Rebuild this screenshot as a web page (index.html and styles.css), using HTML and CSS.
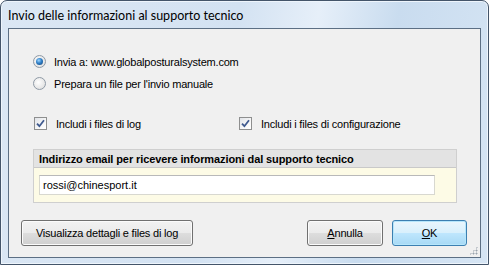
FILE: index.html
```html
<!DOCTYPE html>
<html lang="it">
<head>
    <meta charset="UTF-8">
    <meta name="viewport" content="width=device-width, initial-scale=1.0">
    <title>Invio delle informazioni al supporto tecnico</title>
    <link rel="stylesheet" href="styles.css">
</head>
<body>

    <div class="window">
        <div class="titlebar">
            <span class="title">Invio delle informazioni al supporto tecnico</span>
        </div>

        <div class="client">
            <div class="options">
                <label class="option option-first">
                    <span class="radio checked"></span>
                    <span>Invia a: www.globalposturalsystem.com</span>
                </label>
                <label class="option option-second">
                    <span class="radio"></span>
                    <span>Prepara un file per l'invio manuale</span>
                </label>
                <div class="checks">
                    <label class="option">
                        <span class="check">
                            <svg width="9" height="9" viewBox="0 0 9 9"><path d="M1 4.6 L3.4 7.2 L8 1.2" fill="none" stroke="#3f5a8f" stroke-width="1.8"/></svg>
                        </span>
                        <span>Includi i files di log</span>
                    </label>
                    <label class="option">
                        <span class="check">
                            <svg width="9" height="9" viewBox="0 0 9 9"><path d="M1 4.6 L3.4 7.2 L8 1.2" fill="none" stroke="#3f5a8f" stroke-width="1.8"/></svg>
                        </span>
                        <span>Includi i files di configurazione</span>
                    </label>
                </div>
            </div>

            <div class="email-panel">
                <div class="email-head">Indirizzo email per ricevere informazioni dal supporto tecnico</div>
                <div class="email-body">
                    <div class="email-input">rossi@chinesport.it</div>
                </div>
            </div>

            <div class="actions">
                <button class="btn btn-wide">Visualizza dettagli e files di log</button>
                <div class="spacer"></div>
                <button class="btn"><u>A</u>nnulla</button>
                <button class="btn btn-default"><u>O</u>K</button>
            </div>

            <div class="grip"></div>
        </div>
    </div>

</body>
</html>
```

FILE: styles.css
```css
body {
    margin: 0;
    background: #ffffff;
    font-family: "Liberation Sans", Arial, sans-serif;
    font-size: 11px;
    color: #000000;
}

.window {
    width: 489px;
    height: 265px;
    box-sizing: border-box;
    border: 1px solid #44556a;
    border-radius: 7px 7px 0 0;
    background: linear-gradient(100deg, #dbe7f4 0%, #d3e2f2 45%, #e6eff9 60%, #c9dcef 75%, #d6e5f4 100%);
    box-shadow: inset 0 0 0 1px #eef5fc;
    display: flex;
    flex-direction: column;
}

.titlebar {
    height: 27px;
    display: flex;
    align-items: center;
    padding-left: 7px;
}

.title {
    font-family: "Lato", "Liberation Sans", sans-serif;
    font-size: 12.5px;
    color: #000000;
    margin-top: 1px;
}

.client {
    position: relative;
    margin: 0 7px 6px 7px;
    height: 230px;
    box-sizing: border-box;
    border: 1px solid #5c6f84;
    background: #f0f0f0;
    display: flex;
    flex-direction: column;
}

.options {
    padding: 26px 0 0 24px;
}

.option {
    display: flex;
    align-items: center;
    height: 13px;
    gap: 8px;
    letter-spacing: -0.2px;
}

.option-second {
    margin-top: 9px;
}

.checks {
    display: grid;
    grid-template-columns: 205px auto;
    margin-top: 27px;
    padding-left: 1px;
}

.checks .option {
    gap: 9px;
}

.radio {
    width: 11px;
    height: 11px;
    border-radius: 50%;
    border: 1px solid #8f9aa6;
    background: radial-gradient(circle at 40% 40%, #ffffff 0%, #e4e4e4 70%, #d0d0d0 100%);
    flex: none;
    position: relative;
}

.radio.checked::after {
    content: "";
    position: absolute;
    left: 2px;
    top: 2px;
    width: 7px;
    height: 7px;
    border-radius: 50%;
    background: radial-gradient(circle at 40% 35%, #9fd6ff 0%, #2f7fc7 45%, #123f73 100%);
}

.check {
    width: 11px;
    height: 11px;
    border: 1px solid #8e8f8f;
    background: linear-gradient(135deg, #e0e3e8 0%, #f8f8f8 60%, #ffffff 100%);
    flex: none;
    display: flex;
    align-items: center;
    justify-content: center;
}

.email-panel {
    margin: 19px 0 0 24px;
    width: 424px;
    box-sizing: border-box;
    border: 1px solid #cfcfcf;
}

.email-head {
    height: 17px;
    display: flex;
    align-items: center;
    padding-left: 5px;
    background: #e3e3e3;
    border-bottom: 1px solid #c9c9c9;
    font-weight: bold;
    letter-spacing: -0.1px;
}

.email-body {
    background: #fdfbe6;
    padding: 7px 0 7px 5px;
}

.email-input {
    width: 396px;
    height: 20px;
    box-sizing: border-box;
    background: #ffffff;
    border: 1px solid #d8d8d0;
    border-top-color: #b9b9b9;
    display: flex;
    align-items: center;
    padding-left: 3px;
}

.actions {
    display: flex;
    align-items: center;
    margin-top: 17px;
    padding: 0 13px 0 12px;
    gap: 9px;
}

.spacer {
    flex: 1;
}

.btn {
    height: 26px;
    width: 76px;
    font-family: "Liberation Sans", Arial, sans-serif;
    font-size: 11px;
    letter-spacing: -0.2px;
    color: #000000;
    border: 1px solid #707070;
    border-radius: 3px;
    background: linear-gradient(#f2f2f2 0%, #ebebeb 48%, #dddddd 52%, #cfcfcf 100%);
    box-shadow: inset 0 0 0 1px #fbfbfb;
    padding: 0;
}

.btn-wide {
    width: 172px;
}

.btn-default {
    width: 75px;
    border-color: #3c7fb1;
    background: linear-gradient(#eaf6fd 0%, #d9f0fc 48%, #bee6fd 52%, #a7d9f5 100%);
    box-shadow: inset 0 0 0 1px #b6e6fb;
}

.grip {
    position: absolute;
    right: 2px;
    bottom: 2px;
    width: 9px;
    height: 9px;
    background: radial-gradient(circle, #9aa3ad 0.8px, transparent 1.2px) 0 0 / 3px 3px;
    clip-path: polygon(100% 0, 100% 100%, 0 100%);
}
```
